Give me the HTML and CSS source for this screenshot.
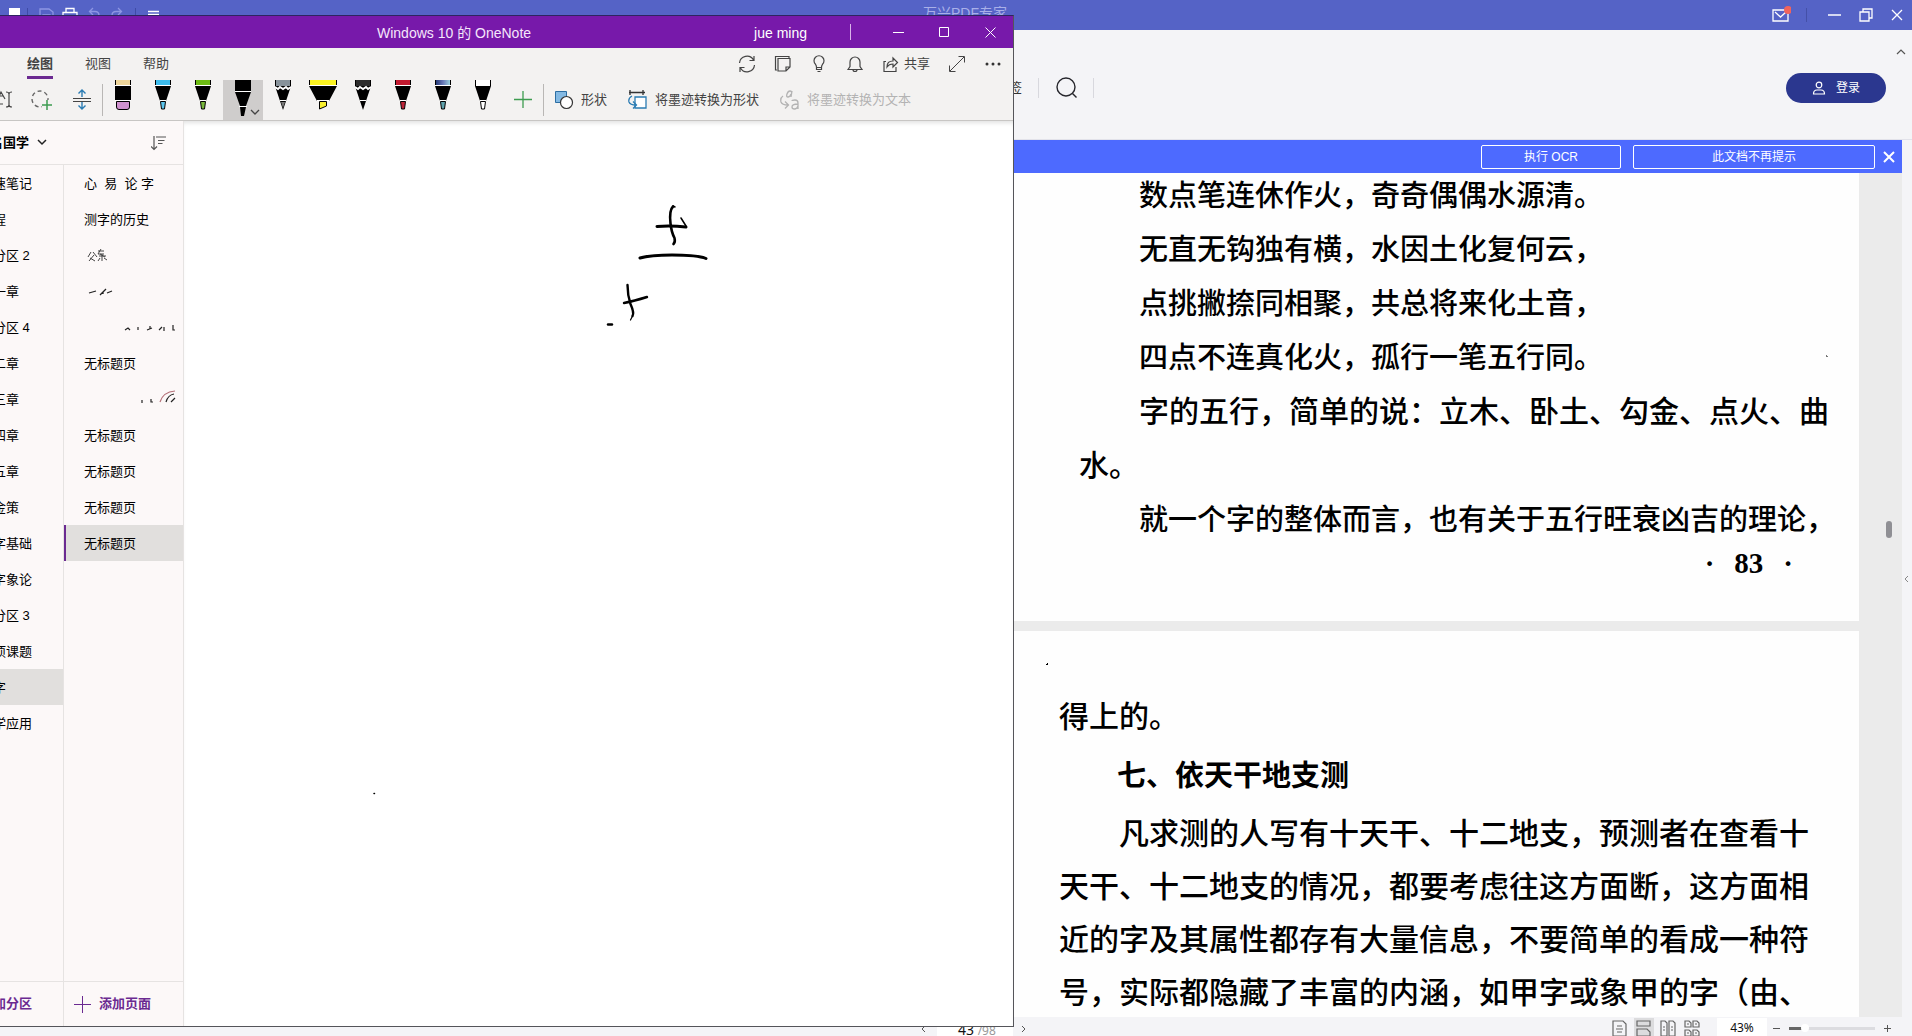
FILE: index.html
```html
<!DOCTYPE html>
<html lang="zh-CN">
<head>
<meta charset="utf-8">
<title>OneNote 与 PDF专家</title>
<link rel="stylesheet" href="styles.css">
</head>
<body>
<div class="pdf">
  <header class="pdf-bar">
    <svg class="quick" width="172" height="30" fill="none" stroke="#8d96e3" stroke-width="1.3">
      <path d="M9 8h11v14H9z" fill="#fff" stroke="none"/>
      <path d="M27.500 8v14M135.500 8v14" stroke="#3f4ba6" stroke-width="1"/>
      <path d="M40 9h9l4 3v9H40zM43 21v-6h7v6"/>
      <path d="M66 13V8.500h8V13M65 20h-2v-7.500h14V20h-2M66 17h8v5h-8z" stroke="#fff"/>
      <path d="M93 8l-3.500 3.500L93 15M90 11.500h5q4 0 4 4t-4 4"/>
      <path d="M118 8l3.500 3.500L118 15M121 11.500h-5q-4 0-4 4t4 4"/>
      <path d="M148 11.500h11M148 14.500h11M151 18l3 3 3-3" stroke="#fff"/>
    </svg>
    <h1 class="pdf-title">万兴PDF专家</h1>
    <div class="pdf-controls">
      <button aria-label="消息"><svg width="20" height="22" fill="none" stroke="#fff" stroke-width="1.300"><path d="M2 6h15v11H2zM4 8l5.500 5L15 8"/><circle cx="17" cy="6" r="4" fill="#f0635c" stroke="none"/></svg></button>
      <i class="bar-line"></i>
      <button aria-label="最小化"><svg width="14" height="14" stroke="#fff" stroke-width="1.500"><path d="M0 7h13"/></svg></button>
      <button aria-label="还原"><svg width="14" height="14" fill="none" stroke="#fff" stroke-width="1.300"><path d="M1 4h9v9H1zM4 4V1h9v9h-3"/></svg></button>
      <button aria-label="关闭"><svg width="14" height="14" stroke="#fff" stroke-width="1.300"><path d="M2 2l10 10M12 2L2 12"/></svg></button>
    </div>
  </header>

  <div class="pdf-ribbon">
    <div class="pdf-tabs">
      <span>签</span>
      <i></i>
      <button aria-label="搜索"><svg width="24" height="24" fill="none" stroke="#26262c" stroke-width="1.400"><circle cx="11" cy="11" r="9"/><path d="M17.500 17.500l4 4"/></svg></button>
      <i></i>
    </div>
    <button class="login"><svg width="14" height="14" fill="none" stroke="#fff" stroke-width="1.200"><circle cx="7" cy="4" r="2.800"/><path d="M1.500 13q0-4 3.500-4h4q3.500 0 3.500 4z"/></svg>登录</button>
    <button class="fold" aria-label="收起"><svg width="12" height="8" fill="none" stroke="#555" stroke-width="1.200"><path d="M2 6l4-4 4 4"/></svg></button>
  </div>

  <div class="pdf-body">
    <div class="pdf-main">
      <div class="ocr">
        <button class="ocr-run">执行 OCR</button>
        <button class="ocr-hide">此文档不再提示</button>
        <button class="ocr-close" aria-label="关闭提示"><svg width="12" height="12" stroke="#fff" stroke-width="2"><path d="M1 1l10 10M11 1L1 11"/></svg></button>
      </div>
      <div class="viewer">
        <div class="sheets">
          <article class="sheet first">
            <div class="column">
              <p class="verse">数点笔连休作火，奇奇偶偶水源清。<br>无直无钩独有横，水因土化复何云，<br>点挑撇捺同相聚，共总将来化土音，<br>四点不连真化火，孤行一笔五行同。</p>
              <p>字的五行，简单的说：立木、卧土、勾金、点火、曲水。</p>
              <p class="long">就一个字的整体而言，也有关于五行旺衰凶吉的理论，</p>
              <div class="folio"><span>·</span><span>83</span><span>·</span></div>
            </div>
          </article>
          <article class="sheet second">
            <div class="column">
              <p class="rest">得上的。</p>
              <h2>七、依天干地支测</h2>
              <p>凡求测的人写有十天干、十二地支，预测者在查看十天干、十二地支的情况，都要考虑往这方面断，这方面相近的字及其属性都存有大量信息，不要简单的看成一种符号，实际都隐藏了丰富的内涵，如甲字或象甲的字（由、</p>
            </div>
          </article>
        </div>
        <div class="track"><i></i></div>
      </div>
    </div>
    <button class="side" aria-label="展开侧栏"><svg width="6" height="8" fill="none" stroke="#888"><path d="M4 1L1 4l3 3"/></svg></button>
  </div>

  <footer class="status">
    <div class="pager">
      <button aria-label="上一页"><svg width="6" height="10" fill="none" stroke="#555"><path d="M4 2L1 5l3 3"/></svg></button>
      <span class="page-no">43 <small>/98</small></span>
      <button aria-label="下一页"><svg width="6" height="10" fill="none" stroke="#555"><path d="M1 2l3 3-3 3"/></svg></button>
    </div>
    <div class="views">
      <button aria-label="单页"><svg width="16" height="17" fill="none" stroke="#666" stroke-width="1.200"><path d="M1 1h10l3 3v12H1zM5 6h5M4 9h7M5 12h5"/></svg></button>
      <button class="on" aria-label="连续"><svg width="16" height="17" fill="none" stroke="#666" stroke-width="1.200"><path d="M1 1h13v5H1zM1 16V9h10l3 3v4z"/></svg></button>
      <button aria-label="双页"><svg width="16" height="17" fill="none" stroke="#666" stroke-width="1.200"><path d="M1 1h4l2 2v13H1zM9 1h4l2 2v13H9zM3 7h2M3 10h2M11 7h2M11 10h2"/></svg></button>
      <button aria-label="双页连续"><svg width="16" height="17" fill="none" stroke="#666" stroke-width="1.200"><path d="M1 1h4l2 2v4H1zM9 1h4l2 2v4H9zM1 10h4l2 2v4H1zM9 10h4l2 2v4H9zM3 4h2M11 4h2M3 13h2M11 13h2"/></svg></button>
    </div>
    <span class="percent">43%</span>
    <div class="zoom">
      <button aria-label="缩小"><svg width="9" height="9" stroke="#555"><path d="M1 4.500h7"/></svg></button>
      <input type="range" min="0" max="100" value="16" aria-label="缩放">
      <button aria-label="放大"><svg width="9" height="9" stroke="#555"><path d="M1 4.500h7M4.500 1v7"/></svg></button>
    </div>
  </footer>
</div>

<div class="note">
  <header class="note-bar">
    <h1>Windows 10 的 OneNote</h1>
    <span class="user">jue ming</span>
    <i></i>
    <button aria-label="最小化"><svg width="11" height="11" stroke="#fff"><path d="M0 5.500h11"/></svg></button>
    <button aria-label="最大化"><svg width="11" height="11" fill="none" stroke="#fff"><path d="M.5.5h9v9h-9z"/></svg></button>
    <button aria-label="关闭"><svg width="11" height="11" stroke="#fff"><path d="M.5.5l10 10M10.500.5l-10 10"/></svg></button>
  </header>

  <div class="note-tabs">
    <nav>
      <a href="#" class="on">绘图</a>
      <a href="#">视图</a>
      <a href="#">帮助</a>
    </nav>
    <div class="actions">
      <button aria-label="同步"><svg width="18" height="18" fill="none" stroke="#444" stroke-width="1.200"><path d="M1.500 8A7.500 7.500 0 0 1 15.500 5M16 1v4.500h-4.500M16.500 10A7.500 7.500 0 0 1 2.500 13M2 17v-4.500h4.500"/></svg></button>
      <button aria-label="便笺"><svg width="18" height="18" fill="none" stroke="#444" stroke-width="1.200"><path d="M4 3.500h12V12l-4 4H4zM12 16v-4h4M3 15H1.500V1.500H15V3"/></svg></button>
      <button aria-label="提示"><svg width="18" height="18" fill="none" stroke="#444" stroke-width="1.200"><path d="M6.500 12.500q0-2-1-3.200a5 5 0 1 1 7 0q-1 1.200-1 3.200zM6.500 12.500v2h5v-2M7.500 16.500h3"/></svg></button>
      <button aria-label="通知"><svg width="18" height="18" fill="none" stroke="#444" stroke-width="1.200"><path d="M2 14.500l2-3V7a5 5 0 0 1 10 0v4.500l2 3zM7 14.500q0 2 2 2t2-2"/></svg></button>
      <button class="share"><svg width="18" height="18" fill="none" stroke="#444" stroke-width="1.200"><path d="M4 6.500H2v10h12V12M5 12q0-6 6-6V3l4.500 4.500L11 12V9q-4 0-6 3z"/></svg>共享</button>
      <button aria-label="全屏"><svg width="18" height="18" fill="none" stroke="#444"><path d="M2 16L16 2M10.500 1.500h6v6M1.500 10.500v6h6"/></svg></button>
      <button aria-label="更多"><svg width="18" height="18" fill="#333"><circle cx="3" cy="9" r="1.500"/><circle cx="9" cy="9" r="1.500"/><circle cx="15" cy="9" r="1.500"/></svg></button>
    </div>
  </div>

  <div class="tools">
    <button class="typing" aria-label="键入"><svg width="20" height="24" fill="none" stroke="#444" stroke-width="1.200"><path d="M4 11L7 4l4 7M5 8h4M12 4q3 0 3 2v11q0 2-3 2M18 4q-3 0-3 2M15 17q0 2 3 2M4 16h5"/></svg></button>
    <button class="tool" aria-label="套索"><svg width="24" height="24" fill="none"><circle cx="10" cy="11" r="8" stroke="#666" stroke-width="1.400" stroke-dasharray="4 3"/><path d="M12 12h10v10H12z" fill="#f3f2f1"/><path d="M17 12v10M12 17h10" stroke="#3d9c50" stroke-width="1.500"/></svg></button>
    <button class="tool" aria-label="插入空间"><svg width="20" height="24" fill="none" stroke="#2b7cb3" stroke-width="1.400"><path d="M10 9V2M6.500 5.500L10 2l3.500 3.500M10 14v7M6.500 17.500L10 21l3.500-3.500"/><path d="M1 10.500h18M1 13.500h18" stroke="#444" stroke-width="1.200"/></svg></button>
    <i></i>
    <div class="pens">
      <button aria-label="橡皮擦"><svg width="28" height="32"><path d="M6 0h16v20H6z"/><path d="M7 0h14v5H7z" fill="#efd69b"/><path d="M6 5h16v1H6zM6 20h16v1H6z" fill="#fff"/><path d="M7.500 21.500h13V27q0 2.500-2.500 2.500h-8Q7.500 29.500 7.500 27z" fill="#cf92cf" stroke="#000"/></svg></button>
      <button aria-label="蓝色笔"><svg width="28" height="32"><path d="M6 0h16v6l-5 15h-6L6 6z"/><path d="M7 0h14v5H7z" fill="#3dbced"/><path d="M6 5h16v1H6zM11 20h6v1h-6z" fill="#fff"/><path d="M11.500 21.500h5L15.500 29h-3z" fill="#5cc6ee" stroke="#000"/></svg></button>
      <button aria-label="绿色笔"><svg width="28" height="32"><path d="M6 0h16v6l-5 15h-6L6 6z"/><path d="M7 0h14v5H7z" fill="#6cbb13"/><path d="M6 5h16v1H6zM11 20h6v1h-6z" fill="#fff"/><path d="M11.500 21.500h5L15.500 29h-3z" fill="#78b83b" stroke="#000"/></svg></button>
      <button class="on" aria-label="黑色笔"><svg width="40" height="40"><path d="M12 0h16v12l-5 14h-6l-5-14zM17 27h6l-2 9h-3z"/><path d="M12 11h16v1H12zM16 26h8v1h-8z" fill="#fff"/><path d="M28 30l4 4 4-4" fill="none" stroke="#444" stroke-width="1.300"/></svg></button>
      <button aria-label="灰色铅笔"><svg width="28" height="32"><path d="M6 0h16v6l-8 24L6 6z"/><path d="M7 0h14v6H7z" fill="#87929a"/><path d="M6 7l3 2 2-2 3 2 3-2 2 2 3-2" fill="none" stroke="#fff" stroke-width="2"/><path d="M11 20h6v1h-6z" fill="#fff"/><path d="M12 22h4l-2 6z" fill="#777"/></svg></button>
      <button aria-label="黄色荧光笔"><svg width="28" height="32"><path d="M0 0h28v6l-8 15h-12L0 6z"/><path d="M1 0h26v5H1z" fill="#fbf321"/><path d="M0 5h28v1H0zM8 20h12v1H8z" fill="#fff"/><path d="M10.500 21.500h7V26l-7 3z" fill="#f8ef2e" stroke="#000"/></svg></button>
      <button aria-label="黑色铅笔"><svg width="28" height="32"><path d="M6 0h16v6l-8 24L6 6z"/><path d="M7 0h14v6H7z" fill="#2d2d2d"/><path d="M6 7l3 2 2-2 3 2 3-2 2 2 3-2" fill="none" stroke="#fff" stroke-width="2"/><path d="M11 20h6v1h-6z" fill="#fff"/></svg></button>
      <button aria-label="红色笔"><svg width="28" height="32"><path d="M6 0h16v6l-5 15h-6L6 6z"/><path d="M7 0h14v5H7z" fill="#c21a30"/><path d="M6 5h16v1H6zM11 20h6v1h-6z" fill="#fff"/><path d="M11.500 21.500h5L15.500 29h-3z" fill="#bd2438" stroke="#000"/></svg></button>
      <button aria-label="星系笔"><svg width="28" height="32"><defs><linearGradient id="galaxy"><stop offset="0" stop-color="#253a78"/><stop offset=".5" stop-color="#6878b6"/><stop offset="1" stop-color="#99d0dc"/></linearGradient></defs><path d="M6 0h16v6l-5 15h-6L6 6z"/><path d="M7 0h14v5H7z" fill="url(#galaxy)"/><path d="M6 5h16v1H6zM11 20h6v1h-6z" fill="#fff"/><path d="M11.500 21.500h5L15.500 29h-3z" fill="#5fa3ad" stroke="#000"/></svg></button>
      <button aria-label="白色笔"><svg width="28" height="32"><path d="M6 0h16v6l-5 15h-6L6 6z"/><path d="M7 0h14v6H7zM11 20h6v1h-6z" fill="#fff"/><path d="M11.500 21.500h5L15.500 29h-3z" fill="#fff" stroke="#000"/></svg></button>
      <button aria-label="添加笔"><svg class="add" width="18" height="40" stroke="#3d9c50" stroke-width="1.300"><path d="M9 11v17M0 19.500h18"/></svg></button>
    </div>
    <i></i>
    <button class="label-tool"><svg width="20" height="20"><path d="M1.500 1.500h11v11h-11z" fill="#83b9e3" stroke="#2c6ea3"/><circle cx="12.500" cy="12.500" r="6" fill="#fff" stroke="#333" stroke-width="1.200"/></svg>形状</button>
    <button class="label-tool"><svg width="20" height="20" fill="none" stroke="#2b7cb3" stroke-width="1.300"><path d="M1 2.500h16M2 0v5M15 0v5" stroke="#333"/><path d="M7 7h11v11H7z" fill="#fff"/><path d="M4 6q-4 2-3 6 1 3 7 3M5 11.500L8.500 15 5 18.500"/></svg>将墨迹转换为形状</button>
    <button class="label-tool" disabled><svg width="20" height="20" fill="none" stroke="#b3b3b3" stroke-width="1.300"><path d="M12 1l-1 6M11 4q-1 3-3 3T7 4t3-3q2 0 1.500 2M18 19v-6q0-3-3-3t-3 1M18 14q-6 0-6 3 0 2 2.500 2t3.500-3M3 6q-3 2-2 6 1 3 7 3M5 11.500L8.500 15 5 18.500"/></svg>将墨迹转换为文本</button>
  </div>

  <div class="workspace">
    <aside class="panes">
      <div class="book">
        <button class="book-name">名国学 <svg width="10" height="7" fill="none" stroke="#222" stroke-width="1.500"><path d="M1 1l4 4 4-4"/></svg></button>
        <button class="sort" aria-label="排序"><svg width="16" height="16" fill="none" stroke="#555" stroke-width="1.200"><path d="M3 1v13M0 11.500L3 14.500l3-3M5 2h10M7 5.500h6.500M7 8.500h4.500"/></svg></button>
      </div>
      <div class="lists">
        <ul class="sections">
          <li>速笔记</li><li>程</li><li>分区 2</li><li>一章</li><li>分区 4</li><li>二章</li><li>三章</li><li>四章</li><li>五章</li><li>金策</li><li>字基础</li><li>字象论</li><li>分区 3</li><li>项课题</li><li class="on">字</li><li>学应用</li>
        </ul>
        <ul class="pages">
          <li>心&nbsp; 易&nbsp; 论 字</li>
          <li>测字的历史</li>
          <li><svg width="96" height="20" fill="none" stroke="#444"><path d="M7 6l-3 5M9 6l4 5M10 9l-5 6M6 12l5 3M14 5h6M17 3l-3 5h6M15 10h7M18 8v7M16 12l-2 3M20 12l3 2M16 8l5 3"/></svg></li>
          <li><svg width="96" height="20" fill="none" stroke="#222" stroke-width="1.300"><path d="M5 11l7-2M16 13l6-6M19 10v2M23 11l5-2"/></svg></li>
          <li><svg width="96" height="20" fill="none" stroke="#222" stroke-width="1.200"><path d="M41 12l3-2 2 2M54 9v3M63 12l5-2M66 8v3M75 12l3-3M80 9v4M89 7v5h2"/></svg></li>
          <li>无标题页</li>
          <li><svg width="96" height="20" fill="none" stroke="#222" stroke-width="1.200"><path d="M58 10v3M67 9v3h2M82 12q2-7 8-8M87 12l4-4"/><path d="M76 12q3-10 15-11" stroke="#b57078"/></svg></li>
          <li>无标题页</li><li>无标题页</li><li>无标题页</li><li class="on">无标题页</li>
        </ul>
      </div>
      <div class="adds">
        <button class="add-section">加分区</button>
        <button class="add-page"><svg width="17" height="17" stroke="#6b2a91"><path d="M8.500 0v17M0 8.500h17"/></svg>添加页面</button>
      </div>
    </aside>
    <main class="canvas">
      <p class="stamp">2022-7-20&nbsp; 4:22</p>
      <svg class="ink" fill="none" stroke="#000" stroke-linecap="round" stroke-linejoin="round">
        <g transform="translate(-184 -121)">
          <path d="M657 226.500q14-1 29 0.500" stroke-width="3"/><path d="M686 226l-5-8" stroke-width="1.500"/>
          <path d="M673 206.500q-4 4-2.500 17 1 9 4 14.500 1 4-1 6" stroke-width="2.600"/><path d="M673 206l2 1" stroke-width="1.500"/>
          <path d="M640 258q10-3 32-3 26 0 34 3.500" stroke-width="3"/>
          <path d="M627.500 285q0 10 3 19 4 9 2 12" stroke-width="2.400"/><path d="M632.500 316l-2 4" stroke-width="1.200"/>
          <path d="M624 303q10-2 23-6" stroke-width="2.400"/>
          <path d="M608 324.500h4" stroke-width="2.400"/><path d="M374 793.500h.5" stroke-width="1.500"/>
        </g>
      </svg>
    </main>
  </div>
</div>
</body>
</html>
```
FILE: styles.css
```css
* { box-sizing: border-box; }
html, body { height: 100%; }
body {
  margin: 0;
  overflow: hidden;
  font: 13px/20px "Liberation Sans", "Noto Sans CJK SC", sans-serif;
  color: #111;
}
button {
  display: flex;
  align-items: center;
  justify-content: center;
  padding: 0;
  border: 0;
  background: none;
  font: inherit;
  color: inherit;
}
h1, h2, p, ul { margin: 0; padding: 0; }
ul { list-style: none; }
svg { display: block; flex: none; }

/* PDF reader */
.pdf { display: flex; flex-direction: column; height: 100%; background: #f4f4f7; }
.pdf-bar {
  display: flex;
  justify-content: space-between;
  flex: none;
  height: 30px;
  background: #5563c6;
}
.pdf-title {
  padding: 3px 0 0 28px;
  margin-right: auto;
  margin-left: 723px;
  font-size: 14px;
  font-weight: 400;
  color: #a9b0e8;
}
.pdf-controls { display: flex; align-items: center; }
.pdf-controls button { width: 31px; height: 30px; }
.bar-line { width: 1px; height: 14px; margin: 0 12px 0 10px; background: #4450a8; }

.pdf-ribbon {
  display: flex;
  flex: none;
  height: 110px;
  padding: 43px 5px 0 1009px;
  border-bottom: 1px solid #e2e2ea;
}
.pdf-tabs { display: flex; align-items: center; height: 30px; margin-right: auto; color: #333; }
.pdf-tabs i { width: 1px; height: 20px; margin: 0 16px; background: #d8d8de; }
.pdf-tabs button { margin-right: -2px; }
.login {
  gap: 10px;
  width: 100px;
  height: 30px;
  border-radius: 15px;
  background: #2b378f;
  font-size: 12px;
  color: #fff;
}
.fold { width: 12px; height: 8px; margin: -25px 0 0 9px; }

.pdf-body { display: flex; flex: 1; min-height: 0; }
.pdf-main { display: flex; flex-direction: column; flex: 1; min-width: 0; }
.side { width: 10px; }
.ocr {
  display: flex;
  align-items: center;
  justify-content: flex-end;
  gap: 12px;
  flex: none;
  height: 33px;
  padding-right: 7px;
  background: #4d6aff;
  font-size: 12px;
  color: #fff;
}
.ocr-run, .ocr-hide { height: 24px; border: 1px solid #fff; border-radius: 2px; }
.ocr-run { width: 140px; }
.ocr-hide { width: 242px; }
.ocr-close { width: 12px; margin-left: -4px; }

.viewer { display: flex; flex: 1; min-height: 0; background: #ebebeb; }
.sheets {
  display: flex;
  flex-direction: column;
  flex: 1;
  gap: 10px;
  min-height: 0;
  overflow: hidden;
}
.sheet { display: flex; justify-content: flex-end; flex: none; background: #fefefe; }
.column {
  width: 750px;
  font: 500 30px/54px "Noto Sans CJK SC", sans-serif;
  text-spacing-trim: space-all;
  color: #000;
}
.column p { text-indent: 60px; }
.first {
  height: 448px;
  padding: 0 30px 0 0;
  background: radial-gradient(circle, #777 1px, transparent 1px) right 31px top 182px / 3px 3px no-repeat #fefefe;
}
.column .verse { padding-left: 60px; font-size: 29px; text-indent: 0; white-space: nowrap; }
.first .column { margin-top: -7px; }
.column .long { font-size: 29px; white-space: nowrap; }
.folio {
  display: flex;
  justify-content: flex-end;
  gap: 20px;
  padding-right: 36px;
  font: bold 29px/38px "Liberation Serif", serif;
}
.second {
  padding: 57px 50px 0 0;
  background: radial-gradient(circle, #000 1px, transparent 1px) right 810px top 32px / 3px 3px no-repeat #fefefe;
}
.second .column { line-height: 53px; }
.second .rest { text-indent: 0; }
.second h2 { padding: 6px 0 5px 58px; font-size: 29px; line-height: 53px; font-weight: 700; }
.track { display: flex; align-items: flex-start; justify-content: center; width: 43px; padding: 348px 0 0 17px; }
.track i { width: 6px; height: 17px; border-radius: 3px; background: #8f8f94; }

.status {
  display: flex;
  align-items: flex-start;
  flex: none;
  height: 19px;
  padding: 1px 20px 0 921px;
  overflow: hidden;
  font: 12px/20px "Noto Sans", "Noto Sans CJK SC", sans-serif;
}
.pager { display: flex; align-items: center; height: 22px; margin-right: auto; }
.page-no { width: 76px; margin: 2px 8px 0 10px; padding-left: 21px; background: #fff; font-size: 14px; }
.page-no small { font-size: 12px; color: #999; }
.views { display: flex; gap: 4px; margin-right: 15px; }
.views button { width: 20px; height: 20px; }
.views .on { background: #dcdcde; }
.percent { width: 50px; margin-right: 5px; background: #fff; text-align: center; }
.zoom { display: flex; align-items: center; gap: 8px; height: 20px; }
.zoom input {
  width: 86px;
  height: 8px;
  margin: 0;
  appearance: none;
  background: linear-gradient(90deg, #666 16px, #dcdce0 16px) center / 100% 3px no-repeat;
}
.zoom input::-webkit-slider-thumb { appearance: none; width: 8px; height: 8px; border-radius: 50%; background: #fff; }

/* OneNote window, floating over the reader */
.note {
  position: absolute;
  inset: 15px 898px 9px -8px;
  display: flex;
  flex-direction: column;
  overflow: hidden;
  border: 1px solid #55555a;
  border-top-color: #2e2460;
  background: #fff;
}
.note-bar {
  display: flex;
  align-items: center;
  flex: none;
  height: 32px;
  padding-left: 384px;
  background: #7719aa;
  font-size: 14px;
  color: #fff;
}
.note-bar h1 { margin-right: auto; font-size: 14px; font-weight: 400; color: #f5e6fb; }
.note-bar h1, .user { padding-top: 2px; }
.note-bar i { width: 1px; height: 16px; margin: 0 24px 0 43px; background: #d9b3ea; }
.note-bar button { width: 46px; height: 32px; }

.note-tabs {
  display: flex;
  justify-content: space-between;
  flex: none;
  height: 32px;
  padding: 0 11px 0 34px;
  background: #f3f2f1;
  color: #444;
}
.note-tabs nav { display: flex; gap: 32px; }
.note-tabs a { padding-top: 6px; color: inherit; text-decoration: none; }
.note-tabs .on { height: 31px; border-bottom: 3px solid #6b2a91; font-weight: 700; }
.actions { display: flex; align-items: center; gap: 18px; }
.share { gap: 4px; }

.tools {
  display: flex;
  align-items: center;
  flex: none;
  height: 41px;
  padding-left: 6px;
  border-bottom: 1px solid #c8c6c4;
  background: #f3f2f1;
  color: #444;
}
.tools > i { width: 1px; height: 32px; background: #b9b7b5; }
.typing { width: 21px; margin-left: -6px; }
.tool { width: 40px; }
.typing + .tool { margin-left: 8px; }
.pens { display: flex; align-items: flex-start; height: 40px; }
.pens button { width: 40px; align-items: flex-start; }
.pens .on { background: #cfcdcc; }
.label-tool { gap: 7px; margin-left: 10px; }
.label-tool + .label-tool { margin-left: 21px; }
.label-tool:disabled { color: #b3b3b3; }

.workspace { display: flex; flex: 1; min-height: 0; }
.panes { display: flex; flex-direction: column; width: 191px; border-right: 1px solid #e6e3e2; background: #fcf8f8; color: #000; }
.book {
  display: flex;
  align-items: center;
  justify-content: space-between;
  flex: none;
  height: 44px;
  padding-right: 16px;
  border-bottom: 1px solid #e6e3e2;
}
.book-name { gap: 8px; font-weight: 700; margin-left: -3px; }
.lists { display: flex; flex: 1; min-height: 0; }
.sections { width: 71px; border-right: 1px solid #e6e3e2; }
.sections li, .pages li { height: 36px; line-height: 36px; white-space: nowrap; }
.sections li { padding-top: 1px; }
.sections .on { background: #e1dfdd; }
.pages { flex: 1; }
.pages li { display: flex; align-items: center; padding: 2px 0 0 20px; }
.pages .on { padding-left: 18px; border-left: 2px solid #6b2a91; background: #e1dfdd; }
.adds {
  display: flex;
  flex: none;
  height: 45px;
  border-top: 1px solid #e6e3e2;
  font-weight: 700;
  color: #6b2a91;
}
.adds button { height: 44px; }
.adds .add-section { justify-content: flex-start; width: 71px; border-right: 1px solid #e6e3e2; }
.add-page { gap: 8px; padding-left: 10px; }

.canvas { position: relative; flex: 1; overflow: hidden; box-shadow: inset 0 4px 4px -2px #e2e2e2; }
.stamp { margin: -12px 0 0 48px; font: 12px/16px "Liberation Sans", sans-serif; color: #777; }
.ink { position: absolute; inset: 0; width: 100%; height: 100%; }
```
